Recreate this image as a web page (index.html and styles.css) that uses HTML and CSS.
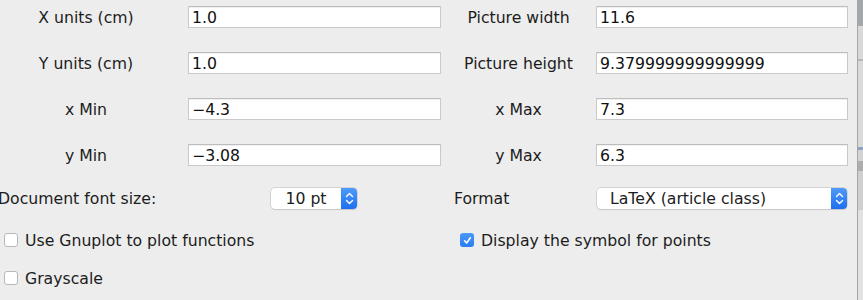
FILE: index.html
```html
<!DOCTYPE html>
<html>
<head>
<meta charset="utf-8">
<link rel="stylesheet" href="styles.css">
</head>
<body>
<div class="window">
  <div class="panel">
    <div class="grid">
      <div class="label">X units (cm)</div>
      <div class="field f-left">1.0</div>
      <div class="label">Picture width</div>
      <div class="field">11.6</div>

      <div class="label">Y units (cm)</div>
      <div class="field f-left">1.0</div>
      <div class="label">Picture height</div>
      <div class="field">9.379999999999999</div>

      <div class="label">x Min</div>
      <div class="field f-left">−4.3</div>
      <div class="label">x Max</div>
      <div class="field">7.3</div>

      <div class="label">y Min</div>
      <div class="field f-left">−3.08</div>
      <div class="label">y Max</div>
      <div class="field">6.3</div>
    </div>

    <div class="row-select">
      <div class="sel-label doc">Document font size:</div>
      <div class="popup spinner">
        <span class="popup-text center">10 pt</span>
        <span class="arrows"><svg width="9" height="13" viewBox="0 0 9 13"><path d="M1.5 4.5 L4.5 1.5 L7.5 4.5 M1.5 8.5 L4.5 11.5 L7.5 8.5" fill="none" stroke="#fff" stroke-width="1.4" stroke-linecap="round" stroke-linejoin="round"/></svg></span>
      </div>
      <div class="sel-label fmt">Format</div>
      <div class="popup combo">
        <span class="popup-text">LaTeX (article class)</span>
        <span class="arrows"><svg width="9" height="13" viewBox="0 0 9 13"><path d="M1.5 4.5 L4.5 1.5 L7.5 4.5 M1.5 8.5 L4.5 11.5 L7.5 8.5" fill="none" stroke="#fff" stroke-width="1.4" stroke-linecap="round" stroke-linejoin="round"/></svg></span>
      </div>
    </div>

    <div class="row-check">
      <label class="check c-left"><span class="box"></span>Use Gnuplot to plot functions</label>
      <label class="check c-right"><span class="box checked"><svg width="9" height="9" viewBox="0 0 9 9"><path d="M1.6 4.8 L3.6 7 L7.4 1.8" fill="none" stroke="#fff" stroke-width="1.6" stroke-linecap="round" stroke-linejoin="round"/></svg></span>Display the symbol for points</label>
    </div>
    <div class="row-check second">
      <label class="check c-left"><span class="box"></span>Grayscale</label>
    </div>
  </div>
  <div class="edge"></div>
</div>
</body>
</html>
```

FILE: styles.css
```css
html, body {
  margin: 0;
  padding: 0;
  background: #ededed;
}
body {
  font-family: "DejaVu Sans", "Lucida Grande", sans-serif;
  font-size: 15.7px;
  color: #1c1c1c;
  width: 863px;
  height: 300px;
  overflow: hidden;
}
.window {
  display: flex;
  height: 300px;
}
.panel {
  width: 857px;
  flex: none;
}
.edge {
  width: 5px;
  flex: none;
  border-left: 1px solid #a6a6a6;
  background: linear-gradient(to bottom,
    #a3a7ac 0, #a3a7ac 26px,
    #d9d9d9 26px, #d9d9d9 59px,
    #b8b8b8 59px, #b8b8b8 61px,
    #dadada 61px, #dadada 147px,
    #8ea3bf 147px, #8ea3bf 150px,
    #d4d4d4 150px, #d4d4d4 161px,
    #adadad 161px, #adadad 171px,
    #cfcfcf 171px, #cfcfcf 210px,
    #e2e2e2 210px);
}
.grid {
  display: grid;
  grid-template-columns: 172px 269px 155px 252px;
  grid-auto-rows: 22px;
  row-gap: 24px;
  padding-top: 6px;
}
.label {
  text-align: center;
  align-self: center;
  white-space: nowrap;
  padding-top: 1px;
}
.field {
  box-sizing: border-box;
  height: 22px;
  background: #fff;
  border: 1px solid #c9c9c9;
  border-top-color: #bdbdbd;
  box-shadow: inset 0 1px 0 #f0f0f0;
  padding: 1px 3px 0;
  line-height: 20px;
  color: #111;
  white-space: nowrap;
  overflow: hidden;
}
.f-left {
  margin-left: 16px;
}
.row-select {
  display: flex;
  align-items: center;
  height: 22px;
  margin-top: 21px;
}
.row-select > * {
  flex: none;
}
.sel-label {
  white-space: nowrap;
}
.doc {
  margin-left: -2px;
  width: 273px;
}
.fmt {
  margin-left: 97px;
  width: 143px;
}
.popup {
  box-sizing: border-box;
  height: 21px;
  display: flex;
  align-items: stretch;
  background: #fff;
  border-radius: 4px;
  box-shadow: 0 0 0 0.5px #bcbcbc, 0 1px 1px rgba(0,0,0,0.12);
  overflow: hidden;
}
.spinner {
  width: 86px;
}
.combo {
  width: 250px;
}
.popup-text {
  flex: 1;
  line-height: 21px;
  padding-left: 13px;
  white-space: nowrap;
}
.popup-text.center {
  padding-left: 0;
  text-align: center;
}
.arrows {
  width: 16px;
  flex: none;
  display: flex;
  align-items: center;
  justify-content: center;
  background: linear-gradient(to bottom, #4f9bf8, #1d6ff0);
}
.row-check {
  display: flex;
  align-items: center;
  height: 20px;
  margin-top: 21px;
}
.row-check.second {
  margin-top: 18px;
}
.check {
  display: flex;
  align-items: center;
  white-space: nowrap;
  flex: none;
}
.c-left {
  margin-left: 4px;
  width: 456px;
}
.box {
  box-sizing: border-box;
  flex: none;
  width: 14px;
  height: 14px;
  border-radius: 3px;
  background: #fff;
  border: 1px solid #b8b8b8;
  margin-right: 7px;
  display: flex;
  align-items: center;
  justify-content: center;
}
.box.checked {
  border: none;
  background: linear-gradient(to bottom, #4a98f7, #2a7cf2);
}
```
